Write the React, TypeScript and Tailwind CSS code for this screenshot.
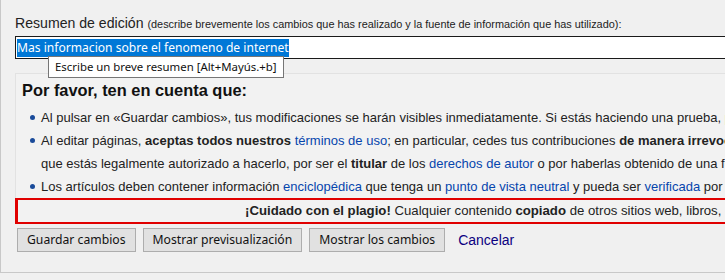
import React from "react";

const A = "font-['Liberation_Sans',Arial,sans-serif]";
const UI = "font-['Noto_Sans',sans-serif]";

const Dot = () => <span className="mt-[9px] mr-[6px] h-[5px] w-[5px] shrink-0 rounded-full bg-[#1a4b9a]" />;

function Bullet({ children }: { children: React.ReactNode }) {
  return (
    <li className="flex items-start">
      <Dot />
      <span className="whitespace-nowrap">{children}</span>
    </li>
  );
}

const L = ({ children }: { children: React.ReactNode }) => (
  <span className="text-[#0645ad]">{children}</span>
);

export default function App() {
  return (
    <div className="h-[280px] w-[725px] overflow-hidden bg-[#f0f0f0]">
      <div className="relative h-[273px] w-[1100px] border-b border-l border-[#c8c8c8] bg-[#f0f0f0] pl-[14px] pt-[14px]">
        <div className={`${A} whitespace-nowrap text-[#222] leading-[17px]`}>
          <span className="text-[14.1px]">Resumen de edición </span>
          <span className="text-[10.9px]">
            (describe brevemente los cambios que has realizado y la fuente de información que has utilizado):
          </span>
        </div>
        <div className="mt-[3px] flex h-[23px] items-center border border-[#1a1a1a] bg-white pl-[1px]">
          <span className={`${UI} bg-[#0078d7] text-[12.1px] leading-[18px] text-white`}>
            Mas informacion sobre el fenomeno de internet
          </span>
        </div>
        <div className={`${UI} absolute left-[47px] top-[56px] z-10 flex h-[22px] items-center border border-[#767676] bg-white px-[6px] text-[11.4px] text-[#111]`}>
          Escribe un breve resumen [Alt+Mayús.+b]
        </div>
        <div className={`${A} mt-[14px] border border-[#e2e2e2] bg-[#f2f2f2] pl-[6px] pt-[6px] text-[#222]`}>
          <div className="text-[16.4px] font-bold leading-[20px] text-[#111]">Por favor, ten en cuenta que:</div>
          <ul className="mt-[6px] ml-[8px] text-[13px] leading-[23px]">
            <Bullet>
              Al pulsar en «Guardar cambios», tus modificaciones se harán visibles inmediatamente. Si estás haciendo una prueba, por favor usa la zona de pruebas.
            </Bullet>
            <li className="flex items-start">
              <Dot />
              <span>
                <span className="block whitespace-nowrap">
                  Al editar páginas, <b>aceptas todos nuestros</b> <L>términos de uso</L>; en particular, cedes tus contribuciones{" "}
                  <b>de manera irrevocable</b> bajo la licencia CC BY-SA 4.0
                </span>
                <span className="block whitespace-nowrap">
                  que estás legalmente autorizado a hacerlo, por ser el <b>titular</b> de los <L>derechos de autor</L> o por haberlas obtenido de una fuente compatible.
                </span>
              </span>
            </li>
            <Bullet>
              Los artículos deben contener información <L>enciclopédica</L> que tenga un <L>punto de vista neutral</L> y pueda ser{" "}
              <L>verificada</L> por fuentes fiables.
            </Bullet>
          </ul>
        </div>
        <div className={`${A} -mt-[1px] flex h-[26px] items-center border-y-2 border-l-[3px] border-[#e00000] bg-[#f2f2f2] pl-[227px] text-[13.2px] text-[#222] whitespace-nowrap`}>
          <b>¡Cuidado con el plagio!</b>&nbsp;Cualquier contenido <b>&nbsp;copiado&nbsp;</b> de otros sitios web, libros, periódicos, etc. sin autorización será borrado.
        </div>
        <div className={`${UI} mt-[4px] flex items-center gap-[7px] pl-[2px] text-[12.2px] text-[#111]`}>
          <button className="h-[24px] border border-[#adadad] bg-[#e1e1e1] px-[9px] leading-[20px]">Guardar cambios</button>
          <button className="h-[24px] border border-[#adadad] bg-[#e1e1e1] px-[9px] leading-[20px]">Mostrar previsualización</button>
          <button className="h-[24px] border border-[#adadad] bg-[#e1e1e1] px-[9px] leading-[20px]">Mostrar los cambios</button>
          <span className={`${A} ml-[6px] text-[14px] text-[#0b0080]`}>Cancelar</span>
        </div>
      </div>
    </div>
  );
}
